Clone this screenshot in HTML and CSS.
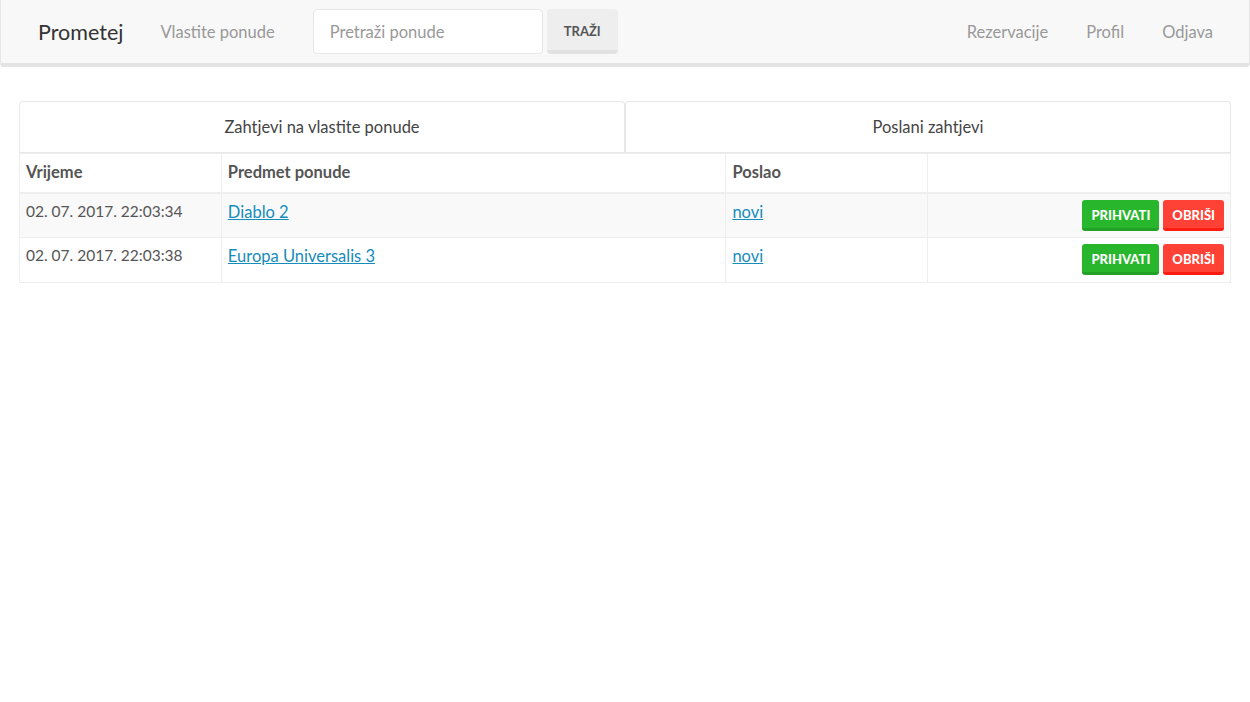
FILE: index.html
```html
<!DOCTYPE html>
<html lang="hr">
<head>
<meta charset="utf-8">
<title>Prometej</title>
<link rel="stylesheet" href="styles.css">
</head>
<body>
<nav class="navbar">
  <a class="brand" href="#">Prometej</a>
  <a class="nav-link" href="#">Vlastite ponude</a>
  <form class="search">
    <input class="search-input" type="text" placeholder="Pretraži ponude">
    <button class="btn-default" type="button">Traži</button>
  </form>
  <div class="nav-right">
    <a class="nav-link" href="#">Rezervacije</a>
    <a class="nav-link" href="#">Profil</a>
    <a class="nav-link" href="#">Odjava</a>
  </div>
</nav>
<main class="container">
  <ul class="tabs">
    <li class="tab"><a href="#">Zahtjevi na vlastite ponude</a></li>
    <li class="tab"><a href="#">Poslani zahtjevi</a></li>
  </ul>
  <table class="table">
    <colgroup>
      <col class="c1"><col class="c2"><col class="c3"><col class="c4">
    </colgroup>
    <thead>
      <tr><th>Vrijeme</th><th>Predmet ponude</th><th>Poslao</th><th></th></tr>
    </thead>
    <tbody>
      <tr class="odd">
        <td>02. 07. 2017. 22:03:34</td>
        <td><a class="link" href="#">Diablo 2</a></td>
        <td><a class="link" href="#">novi</a></td>
        <td class="actions"><button class="btn btn-success">Prihvati</button><button class="btn btn-danger">Obriši</button></td>
      </tr>
      <tr>
        <td>02. 07. 2017. 22:03:38</td>
        <td><a class="link" href="#">Europa Universalis 3</a></td>
        <td><a class="link" href="#">novi</a></td>
        <td class="actions"><button class="btn btn-success">Prihvati</button><button class="btn btn-danger">Obriši</button></td>
      </tr>
    </tbody>
  </table>
</main>
</body>
</html>
```
FILE: styles.css
```css
* { box-sizing: border-box; }
html, body { margin: 0; padding: 0; background: #fff; }
body {
  font-family: "Lato", "Liberation Sans", sans-serif;
  font-size: 16px;
  color: #555;
}
a { text-decoration: none; }

.navbar {
  display: flex;
  align-items: center;
  height: 67px;
  background: #f8f8f8;
  border: 1px solid #e7e7e7;
  border-top: 0;
  border-bottom: 4px solid #e4e4e4;
  border-radius: 0 0 4px 4px;
  padding: 0 36px 0 37px;
}
.brand {
  font-size: 21.5px;
  color: #333;
  margin-right: 37px;
}
.nav-link {
  color: #999;
  font-size: 16.5px;
}
.search {
  display: flex;
  align-items: center;
  margin-left: 38px;
  gap: 4px;
}
.search-input {
  width: 230px;
  height: 45px;
  border: 1px solid #e7e7e7;
  border-radius: 4px;
  padding: 0 16px;
  font-family: inherit;
  font-size: 16.5px;
  color: #555;
  background: #fff;
  outline: none;
}
.search-input::placeholder { color: #999; }
.btn-default {
  width: 71px;
  height: 45px;
  background: #eee;
  border: 0;
  border-bottom: 4px solid #e2e2e2;
  border-radius: 4px;
  font-family: inherit;
  font-weight: 700;
  font-size: 13px;
  color: #555;
  text-transform: uppercase;
  padding-top: 3px;
}
.nav-right {
  margin-left: auto;
  display: flex;
  gap: 38px;
}

.container {
  padding: 0 19px;
  margin-top: 34px;
}
.tabs {
  list-style: none;
  margin: 0;
  padding: 0;
  display: flex;
  border-bottom: 1px solid #e7e7e7;
}
.tab {
  flex: 1;
  height: 51px;
  border: 1px solid #e7e7e7;
  border-bottom: 0;
  border-radius: 4px 4px 0 0;
  display: flex;
  align-items: center;
  justify-content: center;
}
.tab a { color: #444; font-size: 16.5px; }

.table {
  width: 100%;
  border-collapse: collapse;
  table-layout: fixed;
}
.c1 { width: 16.67%; }
.c2 { width: 41.67%; }
.c3 { width: 16.67%; }
.c4 { width: 25%; }
.table th, .table td {
  border: 1px solid #eee;
  padding: 0 6px;
  text-align: left;
  vertical-align: middle;
}
.table th {
  height: 39px;
  font-weight: 700;
  color: #555;
  border-bottom: 2px solid #eee;
  font-size: 16.5px;
  padding-bottom: 2px;
}
.table td {
  height: 45px;
  font-size: 15.5px;
  vertical-align: top;
  padding-top: 8px;
}
.odd td { background: #f9f9f9; }
.link {
  color: #158cba;
  text-decoration: underline;
  font-size: 16.5px;
}
.actions { text-align: right !important; padding-top: 6px !important; }
.btn {
  height: 31px;
  border: 0;
  border-bottom: 3px solid;
  border-radius: 3px;
  color: #fff;
  font-family: inherit;
  font-weight: 900;
  font-size: 13px;
  text-transform: uppercase;
  padding: 2px 9px 0;
  margin-left: 4px;
}
.btn-success { background: #28b62c; border-bottom-color: #23a127; }
.btn-danger { background: #ff4136; border-bottom-color: #ff1d13; }
```
